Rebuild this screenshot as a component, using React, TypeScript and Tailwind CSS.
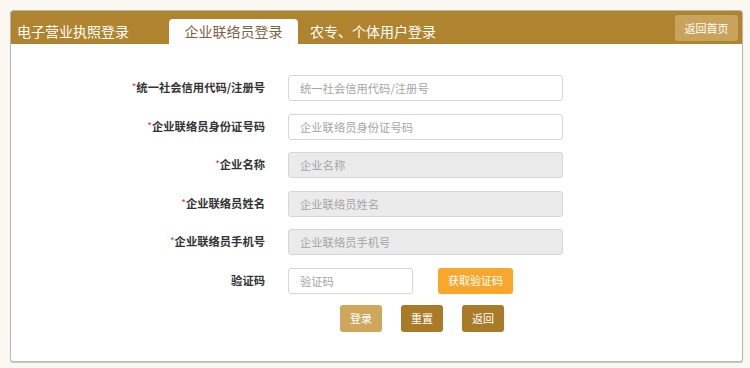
import React from "react";

const font = { fontFamily: '"Microsoft YaHei", "Noto Sans CJK SC", "Noto Sans", sans-serif' };

function Row({ label, required, placeholder, disabled }: { label: string; required?: boolean; placeholder: string; disabled?: boolean }) {
  return (
    <div className="flex items-center h-[26px]">
      <div className="w-[144px] text-right text-[11.3px] font-bold text-[#333] leading-none">
        {required && <span className="text-[#e23b3b] font-normal text-[10px] align-top">*</span>}
        {label}
      </div>
      <input
        disabled={disabled}
        placeholder={placeholder}
        className={`ml-[23px] w-[275px] h-[26px] rounded-[3px] border border-[#d6d6d6] px-[11px] text-[11.3px] outline-none placeholder:text-[#a5a5a5] ${disabled ? "bg-[#ebebeb]" : "bg-white"}`}
        style={font}
      />
    </div>
  );
}

export default function App() {
  return (
    <div className="w-[750px] h-[368px] bg-[#fbf8f1] pt-[10px] pl-[10px]" style={font}>
      <div className="w-[733px] h-[352px] bg-white border border-[#b8b8b8] rounded-[3px] shadow-[0_1px_1px_rgba(0,0,0,0.2)] overflow-hidden">
        <div className="h-[33px] bg-[#b0832f] flex items-end relative">
          <div className="pl-[6px] h-[25px] flex items-center text-white text-[14px] w-[158px]">电子营业执照登录</div>
          <div className="w-[129px] h-[25px] bg-white rounded-t-[4px] flex items-center justify-center text-[14px] text-[#7d6446]">企业联络员登录</div>
          <div className="ml-[12px] h-[25px] flex items-center text-white text-[14px]">农专、个体用户登录</div>
          <button className="absolute right-[4px] top-[4px] w-[63px] h-[26px] rounded-[3px] bg-[#c9a35c] text-white text-[11px]" style={font}>返回首页</button>
        </div>
        <div className="pl-[110px] pt-[31px] flex flex-col gap-[12.5px]">
          <Row label="统一社会信用代码/注册号" required placeholder="统一社会信用代码/注册号" />
          <Row label="企业联络员身份证号码" required placeholder="企业联络员身份证号码" />
          <Row label="企业名称" required placeholder="企业名称" disabled />
          <Row label="企业联络员姓名" required placeholder="企业联络员姓名" disabled />
          <Row label="企业联络员手机号" required placeholder="企业联络员手机号" disabled />
          <div className="flex items-center h-[26px]">
            <div className="w-[144px] text-right text-[11.3px] font-bold text-[#333] leading-none">验证码</div>
            <input
              placeholder="验证码"
              className="ml-[23px] w-[125px] h-[26px] rounded-[3px] border border-[#d6d6d6] px-[11px] text-[11.3px] outline-none placeholder:text-[#a5a5a5] bg-white"
              style={font}
            />
            <button className="ml-[25px] w-[75px] h-[26px] rounded-[3px] bg-[#f9a72b] text-white text-[11px]" style={font}>获取验证码</button>
          </div>
        </div>
        <div className="flex gap-[19px] pl-[329px] pt-[11.5px]">
          <button className="w-[42px] h-[27px] rounded-[3px] bg-[#cfa75c] text-white text-[11px]" style={font}>登录</button>
          <button className="w-[42px] h-[27px] rounded-[3px] bg-[#a97b28] text-white text-[11px]" style={font}>重置</button>
          <button className="w-[42px] h-[27px] rounded-[3px] bg-[#a97b28] text-white text-[11px]" style={font}>返回</button>
        </div>
      </div>
    </div>
  );
}
